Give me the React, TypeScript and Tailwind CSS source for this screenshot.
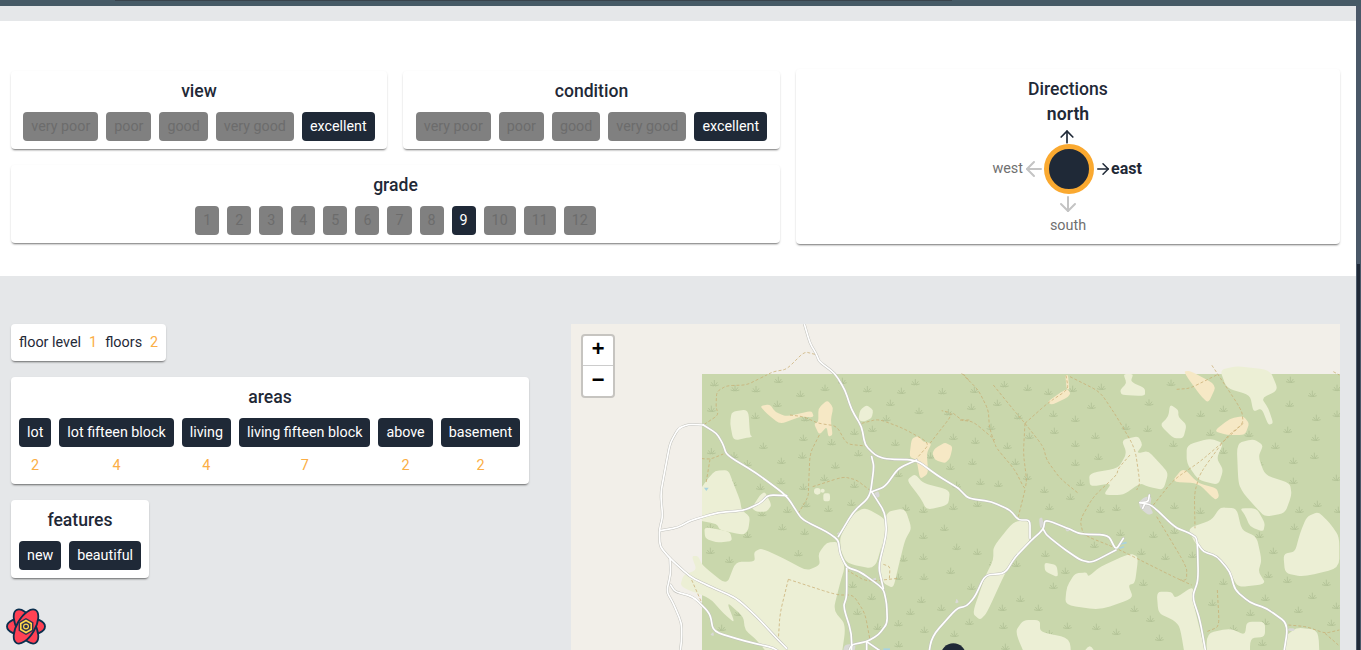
import React from "react";
import { ArrowUp, ArrowDown, ArrowLeft, ArrowRight } from "lucide-react";

// all map drawing is in reference-crop units: x = (px - 570) * 3, y = (py - 320) * 3
// the second set of shapes is shifted by 1170 (crop started at 960)

const paleA = [
  "M485,275 L535,268 L540,345 L548,350 L490,362 L480,310 Z",
  "M380,525 L410,480 L435,452 L475,450 L490,490 L510,540 L515,570 L540,590 L535,630 L520,645 L450,630 L440,612 L380,600 Z",
  "M403,620 L480,635 L487,663 L440,668 L405,655 Z",
  "M570,525 L585,515 L605,555 L590,575 L560,575 L545,565 Z",
  "M760,520 L780,520 L780,544 L760,544 Z",
  "M870,270 L890,255 L910,270 L905,295 L880,305 L865,300 Z",
  "M1010,480 L1035,462 L1060,490 L1140,510 L1135,555 L1070,570 L1052,535 Z",
  "M850,580 L885,563 L945,595 L945,640 L915,748 L830,730 L812,690 L810,650 Z",
  "M950,575 L1005,565 L1025,625 L1005,660 L985,740 L970,805 L940,790 L925,740 L940,640 Z",
  "M365,708 L385,708 L396,735 L470,795 L497,725 L555,725 L552,695 L575,685 L640,715 L710,752 L750,735 L745,700 L770,668 L805,665 L825,740 L810,790 L790,870 L828,915 L810,990 L625,990 L560,960 L525,930 L520,890 L470,845 L495,910 L460,880 L420,835 L330,800 L340,765 L380,750 Z",
];

const paleB = [
  "M780,150 L830,138 L930,150 L955,210 L905,235 L925,265 L940,310 L925,315 L905,265 L880,275 L870,225 L800,205 Z",
  "M490,162 L520,162 L512,185 L555,205 L555,228 L485,225 L480,210 L500,190 Z",
  "M630,253 L655,270 L655,290 L680,315 L670,355 L640,355 L600,315 L625,290 Z",
  "M485,360 L535,348 L548,375 L530,400 L565,393 L600,430 L625,460 L610,510 L565,500 L540,490 L490,525 L430,525 L455,490 L390,500 L387,460 L475,445 L500,400 Z",
  "M680,375 L750,355 L790,370 L770,415 L790,450 L775,495 L715,480 L680,430 Z",
  "M830,370 L880,357 L910,375 L895,410 L915,465 L990,490 L995,525 L975,580 L915,590 L890,565 L850,520 L835,490 Z",
  "M840,565 L890,565 L915,610 L910,635 L870,620 L855,585 Z",
  "M1040,590 L1075,575 L1110,610 L1138,650 L1138,745 L1030,770 L975,760 L970,702 L1005,695 L1020,640 Z",
  "M685,625 L755,600 L780,562 L830,565 L845,630 L890,650 L905,720 L895,755 L918,792 L835,802 L810,760 L770,710 L715,680 L700,660 Z",
  "M253,727 L290,735 L295,772 L255,755 Z",
  "M345,760 L380,757 L385,770 L420,740 L510,700 L535,710 L525,790 L505,795 L520,835 L420,870 L315,855 L320,800 Z",
  "M590,815 L635,815 L645,835 L700,798 L700,850 L725,950 L745,990 L680,990 L660,920 L640,900 L595,880 Z",
  "M740,940 L810,925 L855,945 L860,905 L915,905 L915,950 L870,955 L870,990 L740,990 Z",
  "M975,950 L1010,922 L1075,930 L1080,990 L975,990 Z",
  "M190,900 L240,900 L240,935 L330,955 L335,990 L210,990 L165,935 Z",
  "M345,990 L390,968 L425,990 Z",
  "M160,605 L205,600 L215,655 L165,712 L135,760 L80,880 L60,900 L37,880 L75,770 L100,720 L100,680 Z",
];

const tanA = [
  "M570,258 L600,253 L615,275 L650,290 L725,272 L732,292 L690,290 L630,313 L590,280 Z",
  "M745,265 L772,240 L790,262 L782,300 L788,345 L775,350 L770,320 L748,345 L732,312 L745,305 Z",
  "M1025,355 L1045,348 L1060,365 L1085,370 L1070,400 L1075,460 L1050,478 L1040,420 L1018,410 Z",
  "M1095,385 L1125,367 L1148,380 L1140,415 L1125,430 L1095,420 L1087,400 Z",
];

const tanB = [
  "M670,155 L690,152 L770,195 L745,250 L720,225 Z",
  "M262,245 L320,205 L332,220 L322,232 L275,255 Z",
  "M316,165 L324,165 L328,208 L320,208 Z",
  "M762,333 L810,295 L850,288 L868,310 L855,345 L800,345 Z",
  "M635,485 L670,443 L715,490 L770,505 L778,530 L765,540 L715,490 Z",
];

const grayA = [
  "M905,525 L925,512 L930,530 L915,535 Z",
  "M798,642 L818,630 L812,645 Z",
  "M905,778 L918,772 L918,785 Z",
  "M1155,850 L1160,835 L1167,848 Z",
  "M820,975 L860,970 L840,990 L820,990 Z",
  "M420,945 L430,935 L432,948 Z",
];

const grayB = [
  "M537,545 L555,530 L575,530 L570,560 L580,580 L565,585 L540,565 Z",
  "M237,595 L247,592 L252,620 L240,625 Z",
  "M315,625 L335,630 L320,635 Z",
  "M985,925 L1003,925 L1003,933 L985,933 Z",
];

const roadsA = [
  "M703,12 L720,70 L738,100 L748,125 L795,160 L825,210 L845,270 L875,320 L885,375 L915,405 L945,417 L1040,420 L1100,465 L1165,505 L1170,510 L1195,535 L1265,545 L1320,570 L1345,600 L1380,600 L1380,655",
  "M1070,990 L1085,950 L1160,865 L1190,858 L1215,830 L1245,765 L1305,760 L1335,712 L1380,665 L1420,628 L1425,598 L1500,628 L1530,642 L1615,645 L1638,690 L1660,655",
  "M1420,628 L1430,645 L1470,678 L1530,720 L1565,728 L1638,690",
  "M400,315 L355,313 L325,325 L300,370 L285,450 L272,520 L278,590 L268,630 L270,680 L300,715 L360,770 L410,795 L500,835 L560,890 L625,960 L650,985",
  "M400,315 L440,340 L458,370 L470,405 L560,460 L650,527 L690,590 L705,603 L770,635 L805,660 L810,700 L830,742 L870,755 L940,805 L950,850 L952,910 L925,945 L890,965 L840,975 L830,990",
  "M270,632 L325,622 L360,602 L445,577 L520,572 L570,550 L595,525 L650,527",
  "M300,715 L302,760 L290,815 L310,850 L335,910 L335,960 L325,990",
  "M302,795 L315,815 L370,830 L420,880 L430,935 L530,965 L620,985 L660,990",
  "M805,650 L850,575 L900,530 L912,440 L905,410",
  "M905,515 L945,578 L950,640 L925,740 L940,805",
  "M905,515 L945,500 L985,445 L1040,420",
  "M830,745 L830,830 L820,860 L845,940 L845,990",
  "M890,965 L890,990",
  "M890,965 L1000,990",
];

const roadsB = [
  "M540,548 L575,555 L645,622 L690,640 L712,655 L715,780 L697,830 L720,900 L745,990",
  "M712,670 L730,695 L770,708 L810,755 L825,810 L870,848 L920,865 L985,912 L965,990",
  "M540,548 L565,545 L568,525",
  "M548,565 L555,550",
];

const pathsA = [
  "M735,103 L703,95 L650,148 L610,155 L580,170 L530,195 L470,197 L440,215 L438,260 L445,285 L400,315",
  "M365,413 L420,418 L460,402",
  "M420,418 L408,490",
  "M660,285 L700,290 L745,310 L800,318 L830,372 L885,378",
  "M748,345 L720,400 L716,490 L715,530 L685,580",
  "M728,500 L820,470 L860,480 L905,515",
  "M875,310 L925,297 L1000,325 L1080,370 L1040,415",
  "M1080,370 L1150,280 L1115,272",
  "M1150,280 L1175,300 L1200,300",
  "M655,778 L630,880 L625,960",
  "M655,778 L800,825 L850,825 L885,880 L900,960",
  "M830,750 L890,785 L985,775",
  "M940,733 L960,740 L958,780",
  "M365,780 L396,850",
  "M1180,162 L1200,185",
];

const pathsB = [
  "M5,160 L55,210 L85,270 L88,320 L100,360",
  "M0,300 L40,305 L105,360",
  "M100,195 L165,275 L195,310 L250,380 L260,420 L300,475 L355,520",
  "M195,310 L190,400 L200,480 L195,510 L165,450 L110,385 L100,360",
  "M195,510 L175,590",
  "M195,310 L262,250 L325,208 L318,165",
  "M330,170 L420,215 L470,290 L525,385 L540,490 L530,510",
  "M510,405 L475,445 L470,465 L400,530 L360,600 L370,645 L470,685 L640,770 L695,795",
  "M580,555 L640,480 L720,425 L790,365 L850,310 L845,270 L755,135",
  "M650,208 L690,205 L770,165",
  "M850,310 L800,350 L720,460 L703,520 L705,625",
  "M590,590 L680,740 L680,780 L660,780",
  "M772,810 L778,920 L740,935",
  "M985,915 L1040,920 L1095,940 L1138,930",
  "M1095,940 L1135,975",
  "M1120,155 L1138,165",
];

const tuftsA = [
  [433, 190], [625, 180], [817, 183], [1036, 187], [558, 208], [765, 204], [892, 208], [994, 213], [1117, 214], [495, 205],
  [691, 222], [622, 252], [961, 249], [1047, 273], [1135, 277], [424, 267], [556, 288], [706, 295], [949, 295], [853, 336],
  [907, 327], [1150, 351], [700, 354], [785, 367], [976, 369], [580, 378], [865, 400], [1082, 407], [424, 394], [492, 406],
  [697, 407], [532, 430], [634, 423], [796, 437], [1141, 441], [985, 462], [763, 474], [633, 484], [853, 495], [409, 497],
  [571, 501], [700, 501], [1160, 495], [487, 490], [844, 549], [708, 553], [775, 567], [652, 570], [1007, 564], [1060, 570],
  [1150, 561], [576, 580], [1123, 624], [637, 622], [704, 636], [421, 622], [532, 645], [1060, 648], [1160, 681], [421, 693],
  [685, 700], [478, 720], [1000, 716], [1060, 711], [1142, 753], [848, 795], [1062, 771], [985, 771], [905, 831], [1054, 840],
  [862, 876], [1021, 876], [1114, 864], [505, 879], [455, 924], [985, 910], [923, 921], [1063, 930], [1153, 942], [986, 973],
];

const tuftsB = [
  [43, 210], [133, 193], [203, 204], [265, 216], [338, 207], [424, 201], [633, 189], [991, 180], [1131, 204], [1057, 222],
  [34, 261], [112, 249], [567, 248], [280, 282], [394, 258], [790, 267], [989, 252], [1069, 294], [175, 289], [346, 297],
  [722, 282], [1131, 282], [93, 321], [498, 321], [563, 327], [983, 330], [208, 348], [283, 333], [406, 348], [751, 339],
  [867, 342], [1066, 354], [46, 363], [142, 378], [346, 372], [640, 372], [946, 378], [790, 393], [37, 426], [415, 411],
  [346, 429], [166, 426], [1063, 408], [897, 429], [1000, 423], [202, 471], [1129, 474], [61, 486], [115, 492], [361, 489],
  [253, 510], [1000, 483], [331, 531], [52, 552], [268, 561], [421, 570], [469, 564], [643, 558], [721, 573], [1072, 552],
  [1018, 570], [1135, 570], [1003, 621], [898, 645], [52, 696], [256, 702], [403, 675], [580, 645], [643, 633], [481, 639],
  [544, 696], [697, 705], [616, 711], [940, 693], [169, 732], [100, 729], [316, 753], [925, 765], [982, 780], [1099, 789],
  [550, 789], [790, 786], [280, 798], [34, 801], [181, 837], [1057, 828], [916, 834], [127, 864], [235, 864], [1129, 858],
  [757, 849], [523, 867], [1015, 870], [871, 879], [28, 906], [130, 918], [322, 918], [409, 921], [571, 897], [916, 906],
  [268, 940], [469, 936], [820, 925], [598, 954], [907, 969], [1114, 909], [136, 981], [1060, 970],
];

// rounds the traced corners, keeping the straight part of each edge
function smooth(d: string) {
  const nums = d.match(/-?\d+(\.\d+)?/g)!.map(Number);
  const pts: number[][] = [];
  for (let i = 0; i < nums.length; i += 2) {
    pts.push([nums[i], nums[i + 1] === 990 ? 1040 : nums[i + 1]]);
  }
  const along = (a: number[], b: number[]) => `${a[0] + (b[0] - a[0]) * 0.3},${a[1] + (b[1] - a[1]) * 0.3}`;
  const n = pts.length;
  if (d.trim().endsWith("Z")) {
    let out = "";
    pts.forEach((p, i) => {
      const from = along(p, pts[(i + n - 1) % n]);
      out += `${i === 0 ? "M" : "L"}${from} Q${p[0]},${p[1]} ${along(p, pts[(i + 1) % n])} `;
    });
    return out + "Z";
  }
  let out = `M${pts[0][0]},${pts[0][1]}`;
  for (let i = 1; i < n - 1; i++) {
    out += ` L${along(pts[i], pts[i - 1])} Q${pts[i][0]},${pts[i][1]} ${along(pts[i], pts[i + 1])}`;
  }
  return out + ` L${pts[n - 1][0]},${pts[n - 1][1]}`;
}

const cardShadow = "shadow-[0_2px_2px_-1px_rgba(0,0,0,0.5),0_1px_3px_rgba(0,0,0,0.08)]";

function Tuft({ x, y }: { x: number; y: number }) {
  return (
    <path
      d={`M${x},${y - 10} L${x},${y + 8} M${x - 9},${y - 3} L${x - 1},${y + 8} M${x + 9},${y - 3} L${x + 1},${y + 8} M${x - 13},${y + 5} L${x - 2},${y + 8} M${x + 13},${y + 5} L${x + 2},${y + 8}`}
      stroke="#aebf93"
      strokeWidth="2.4"
      fill="none"
    />
  );
}

function MapLayer({ pale, tan, gray, paths, tufts, shift }: any) {
  return (
    <g transform={`translate(${shift},0)`}>
      {tufts.map((t: number[], i: number) => <Tuft key={i} x={t[0]} y={t[1]} />)}
      {pale.map((d: string, i: number) => <path key={i} d={smooth(d)} fill="#ecefd5" />)}
      {tan.map((d: string, i: number) => <path key={i} d={smooth(d)} fill="#f6e8c5" />)}
      {gray.map((d: string, i: number) => <path key={i} d={smooth(d)} fill="#d9d9d6" />)}
      {paths.map((d: string, i: number) => (
        <path key={i} d={smooth(d)} fill="none" stroke="#c8ab70" strokeWidth="2.2" strokeDasharray="9 6" />
      ))}
    </g>
  );
}

function MapRoads({ roads, shift }: { roads: string[]; shift: number }) {
  return (
    <g transform={`translate(${shift},0)`} fill="none" strokeLinejoin="round" strokeLinecap="round">
      {roads.map((d, i) => <path key={i} d={smooth(d)} stroke="#c2c2bd" strokeWidth="8" />)}
      {roads.map((d, i) => <path key={i} d={smooth(d)} stroke="#ffffff" strokeWidth="5" />)}
    </g>
  );
}

function MapView() {
  return (
    <div className="relative h-[326px] w-[769px] shrink-0 overflow-hidden bg-[#f2efe9]">
      <svg viewBox="3 12 2307 978" className="block h-full w-full">
        <rect x="396" y="162" width="1920" height="830" fill="#c9d7ac" />
        <MapLayer pale={paleA} tan={tanA} gray={grayA} paths={pathsA} tufts={tuftsA} shift={0} />
        <MapLayer pale={paleB} tan={tanB} gray={grayB} paths={pathsB} tufts={tuftsB} shift={1170} />
        <path d="M0,162 L396,162 L396,708 L0,708 Z" fill="#f2efe9" />
        <circle cx="742" cy="514" r="10" fill="#ecefd5" />
        <circle cx="758" cy="512" r="6" fill="#ecefd5" />
        <path d="M402,503 L416,503 L409,513 Z" fill="#a9d3df" />
        <path d="M1650,672 L1670,668 M1648,685 L1662,680" stroke="#a9d3df" strokeWidth="5" />
        <path d="M940,985 L960,985 L960,990 L940,990 Z" fill="#a9d3df" />
        <MapRoads roads={roadsA} shift={0} />
        <MapRoads roads={roadsB} shift={1170} />
        <circle cx="1150" cy="1008" r="38" fill="#1f2937" />
      </svg>
      <div className="absolute left-[10px] top-[10px] flex w-[34px] flex-col rounded-[4px] border-2 border-[#c6c4c0] bg-white font-['Liberation_Mono',monospace] text-[22px] font-bold text-black">
        <div className="flex h-[30px] items-center justify-center border-b border-[#cccccc]">+</div>
        <div className="flex h-[30px] items-center justify-center">−</div>
      </div>
    </div>
  );
}

function Chip({ label, off }: { label: string; off?: boolean }) {
  return (
    <div
      className={
        off
          ? "h-[29px] shrink-0 whitespace-nowrap rounded-[4px] bg-[#808080] px-2 py-1 text-[14.3px] leading-[21px] text-[#6c6c6c]"
          : "h-[29px] shrink-0 whitespace-nowrap rounded-[4px] bg-[#1f2937] px-2 py-1 text-[14.3px] leading-[21px] text-white"
      }
    >
      {label}
    </div>
  );
}

function Title({ text }: { text: string }) {
  return <h3 className="mb-2 text-center text-[17.6px] font-medium leading-[26px] text-[#1f2937]">{text}</h3>;
}

function Rating({ title, className }: { title: string; className: string }) {
  return (
    <div className={`rounded-[4px] bg-white px-2 pb-2 pt-[7px] ${cardShadow} ${className}`}>
      <Title text={title} />
      <div className="flex justify-center gap-2">
        <Chip label="very poor" off />
        <Chip label="poor" off />
        <Chip label="good" off />
        <Chip label="very good" off />
        <Chip label="excellent" />
      </div>
    </div>
  );
}

function Directions() {
  return (
    <div className={`flex-1 rounded-[4px] bg-white px-2 pb-2 pt-[7px] ${cardShadow}`}>
      <h3 className="text-center text-[17.6px] font-medium leading-[26px] text-[#1f2937]">Directions</h3>
      <div className="-mt-px text-center text-[17.6px] font-semibold leading-[26px] text-[#1f2937]">north</div>
      <div className="-mb-[3px] flex justify-center pr-[2px]">
        <ArrowUp size={20} className="text-[#1f2937]" />
      </div>
      <div className="grid grid-cols-[1fr_auto_1fr] items-center pl-[2px]">
        <div className="flex items-center justify-end text-[14.4px] text-[#707070]">
          west
          <ArrowLeft size={24} className="-ml-px -mr-[2px] text-[#c4c4c4]" />
        </div>
        <div className="h-[50px] w-[50px] rounded-full border-[5px] border-[#faa930] bg-[#1f2937]" />
        <div className="flex items-center text-base font-bold text-[#1f2937]">
          <ArrowRight size={18} className="-mr-px" />
          east
        </div>
      </div>
      <div className="-my-[2px] flex justify-center pr-px">
        <ArrowDown size={24} className="text-[#c4c4c4]" />
      </div>
      <div className="mt-px text-center text-[14.4px] leading-[21px] text-[#707070]">south</div>
    </div>
  );
}

function AreaItem({ label, value }: { label: string; value: string }) {
  return (
    <div className="flex flex-col items-center gap-2">
      <Chip label={label} />
      <span className="text-[14.4px] leading-[21px] text-[#fbae45]">{value}</span>
    </div>
  );
}

function QueryLogo() {
  return (
    <svg viewBox="0 0 40 36" className="absolute bottom-[5px] left-[6px] h-[37px] w-[40px]">
      <g fill="#ff4154" stroke="#0b2f4e" strokeWidth="1.8">
        <ellipse cx="20" cy="18" rx="19" ry="9" />
        <ellipse cx="20" cy="18" rx="19" ry="9" transform="rotate(60 20 18)" />
        <ellipse cx="20" cy="18" rx="19" ry="9" transform="rotate(120 20 18)" />
      </g>
      <path d="M20,9.5 L27.4,13.8 L27.4,22.2 L20,26.5 L12.6,22.2 L12.6,13.8 Z" fill="#0b2f4e" opacity="0.85" />
      <path d="M20,12 L25.2,15 L25.2,21 L20,24 L14.8,21 L14.8,15 Z" fill="none" stroke="#ffd94c" strokeWidth="1.6" />
      <circle cx="20" cy="18" r="2.4" fill="none" stroke="#ffd94c" strokeWidth="1.2" />
    </svg>
  );
}

export default function App() {
  const grades = ["1", "2", "3", "4", "5", "6", "7", "8", "9", "10", "11", "12"];
  return (
    <div className="relative flex h-[650px] flex-col overflow-hidden bg-[#e5e7e9] font-['Roboto',sans-serif]">
      <div className="h-[6px] shrink-0 bg-[#465a66]">
        <div className="ml-[115px] h-px w-[837px] bg-[#39434c]" />
      </div>
      <div className="flex min-h-0 flex-1">
        <div className="min-w-0 flex-1">
          <div className="mt-[15px] flex items-stretch gap-4 bg-white pb-8 pl-[11px] pr-4 pt-12">
            <div className="mt-[2px] flex w-[769px] shrink-0 flex-col gap-4">
              <div className="flex gap-4">
                <Rating title="view" className="w-[376px]" />
                <Rating title="condition" className="w-[377px]" />
              </div>
              <div className={`rounded-[4px] bg-white pb-2 pt-[7px] ${cardShadow}`}>
                <Title text="grade" />
                <div className="flex justify-center gap-2">
                  {grades.map((g) => (
                    <Chip key={g} label={g} off={g !== "9"} />
                  ))}
                </div>
              </div>
            </div>
            <Directions />
          </div>
          <div className="flex justify-between pl-[11px] pr-4 pt-12">
            <div className="flex w-[518px] flex-col items-start gap-4">
              <div className={`flex gap-2 rounded-[4px] bg-white p-2 text-[14.4px] leading-[21px] text-[#1f2937] ${cardShadow}`}>
                <span>floor level</span>
                <span className="text-[#fbae45]">1</span>
                <span>floors</span>
                <span className="text-[#fbae45]">2</span>
              </div>
              <div className={`w-full rounded-[4px] bg-white px-2 pb-2 pt-[7px] ${cardShadow}`}>
                <Title text="areas" />
                <div className="flex gap-2">
                  <AreaItem label="lot" value="2" />
                  <AreaItem label="lot fifteen block" value="4" />
                  <AreaItem label="living" value="4" />
                  <AreaItem label="living fifteen block" value="7" />
                  <AreaItem label="above" value="2" />
                  <AreaItem label="basement" value="2" />
                </div>
              </div>
              <div className={`rounded-[4px] bg-white px-2 pb-2 pt-[7px] ${cardShadow}`}>
                <Title text="features" />
                <div className="flex gap-2">
                  <Chip label="new" />
                  <Chip label="beautiful" />
                </div>
              </div>
            </div>
            <MapView />
          </div>
        </div>
        <div className="flex w-[5px] shrink-0 flex-col bg-[#4a5868] px-px pt-[258px]">
          <div className="flex-1 bg-[#1f2937]" />
        </div>
      </div>
      <QueryLogo />
    </div>
  );
}
